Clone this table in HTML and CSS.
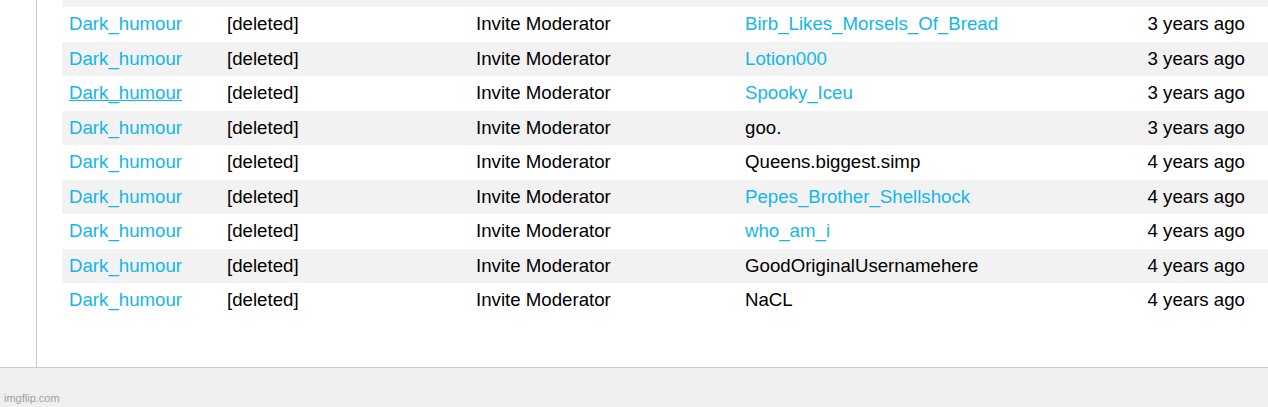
FILE: index.html
```html
<!DOCTYPE html>
<html>
<head>
<meta charset="utf-8">
<link rel="stylesheet" href="styles.css">
</head>
<body>
<div class="main">
  <div class="side"></div>
  <div class="content">
    <div class="table">
      <div class="row-edge"></div>
      <div class="row">
        <div class="c"><a class="link">Dark_humour</a></div>
        <div class="c">[deleted]</div>
        <div class="c">Invite Moderator</div>
        <div class="c"><a class="link">Birb_Likes_Morsels_Of_Bread</a></div>
        <div class="c r">3 years ago</div>
      </div>
      <div class="row gray">
        <div class="c"><a class="link">Dark_humour</a></div>
        <div class="c">[deleted]</div>
        <div class="c">Invite Moderator</div>
        <div class="c"><a class="link">Lotion000</a></div>
        <div class="c r">3 years ago</div>
      </div>
      <div class="row">
        <div class="c"><a class="link hover">Dark_humour</a></div>
        <div class="c">[deleted]</div>
        <div class="c">Invite Moderator</div>
        <div class="c"><a class="link">Spooky_Iceu</a></div>
        <div class="c r">3 years ago</div>
      </div>
      <div class="row gray">
        <div class="c"><a class="link">Dark_humour</a></div>
        <div class="c">[deleted]</div>
        <div class="c">Invite Moderator</div>
        <div class="c">goo.</div>
        <div class="c r">3 years ago</div>
      </div>
      <div class="row">
        <div class="c"><a class="link">Dark_humour</a></div>
        <div class="c">[deleted]</div>
        <div class="c">Invite Moderator</div>
        <div class="c">Queens.biggest.simp</div>
        <div class="c r">4 years ago</div>
      </div>
      <div class="row gray">
        <div class="c"><a class="link">Dark_humour</a></div>
        <div class="c">[deleted]</div>
        <div class="c">Invite Moderator</div>
        <div class="c"><a class="link">Pepes_Brother_Shellshock</a></div>
        <div class="c r">4 years ago</div>
      </div>
      <div class="row">
        <div class="c"><a class="link">Dark_humour</a></div>
        <div class="c">[deleted]</div>
        <div class="c">Invite Moderator</div>
        <div class="c"><a class="link">who_am_i</a></div>
        <div class="c r">4 years ago</div>
      </div>
      <div class="row gray">
        <div class="c"><a class="link">Dark_humour</a></div>
        <div class="c">[deleted]</div>
        <div class="c">Invite Moderator</div>
        <div class="c">GoodOriginalUsernamehere</div>
        <div class="c r">4 years ago</div>
      </div>
      <div class="row">
        <div class="c"><a class="link">Dark_humour</a></div>
        <div class="c">[deleted]</div>
        <div class="c">Invite Moderator</div>
        <div class="c">NaCL</div>
        <div class="c r">4 years ago</div>
      </div>
    </div>
  </div>
</div>
<div class="footer">imgflip.com</div>
</body>
</html>
```
FILE: styles.css
```css
html, body {
  margin: 0;
  padding: 0;
  background: #ffffff;
}
body {
  font-family: "Liberation Sans", Arial, sans-serif;
  width: 1268px;
  height: 407px;
  overflow: hidden;
}
.main {
  display: flex;
  height: 367px;
  overflow: hidden;
}
.side {
  width: 36px;
  flex: none;
  border-right: 1px solid #cccccc;
}
.content {
  flex: 1;
  padding-left: 25px;
  overflow: hidden;
}
.table {
  display: flex;
  flex-direction: column;
}
.row-edge {
  height: 7px;
  background: #f2f2f2;
}
.row {
  display: grid;
  grid-template-columns: 158px 249px 269px 1fr auto;
  height: 34.5px;
  line-height: 34.5px;
  font-size: 18.67px;
  color: #000000;
  background: #ffffff;
  white-space: nowrap;
}
.row.gray {
  background: #f2f2f2;
}
.c {
  padding-left: 7px;
}
.c.r {
  text-align: right;
  padding-right: 23px;
}
.link {
  color: #14b6ec;
  text-decoration: none;
}
.link.hover {
  text-decoration: underline;
}
.footer {
  height: 39px;
  border-top: 1px solid #cccccc;
  background: #efefef;
  font-size: 11px;
  color: #a0a0a0;
  padding-left: 4px;
  display: flex;
  align-items: flex-end;
  padding-bottom: 0;
  line-height: 17px;
}
```
